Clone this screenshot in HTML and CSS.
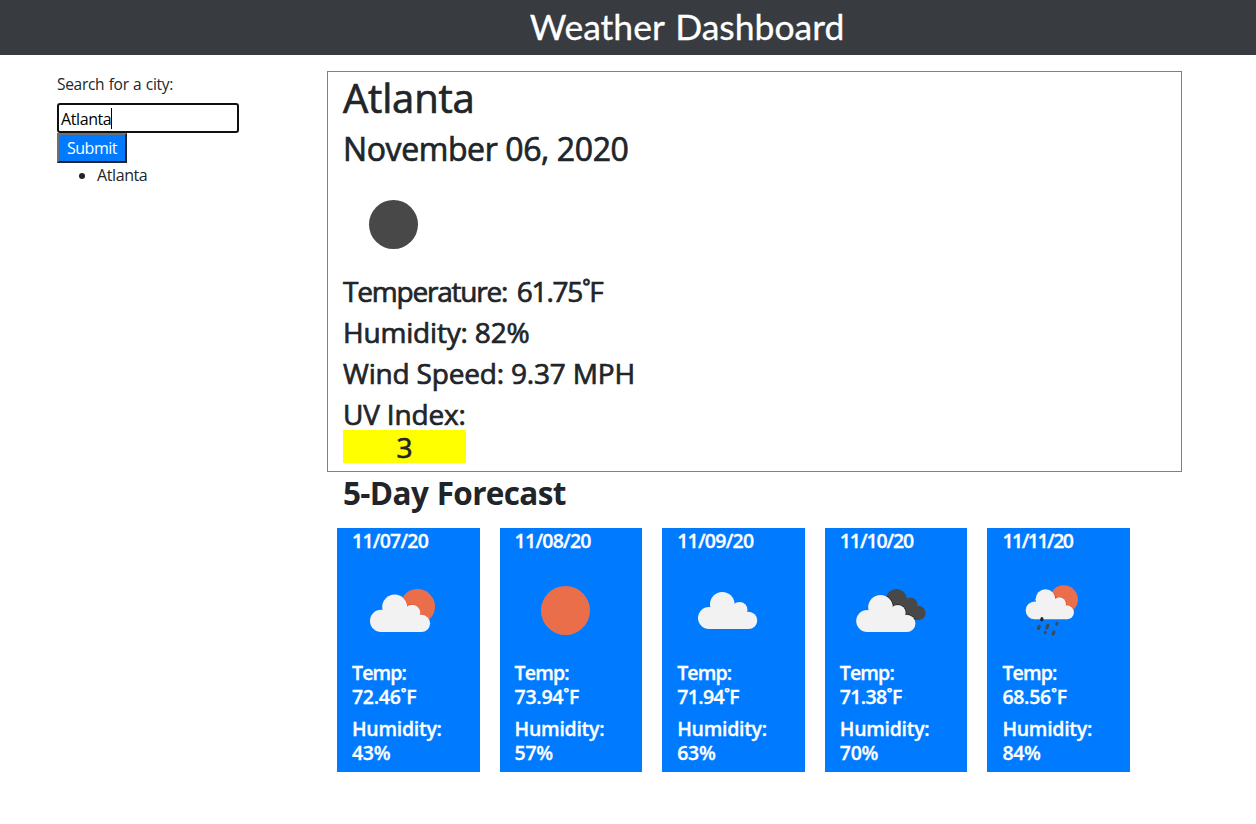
FILE: index.html
```
<!DOCTYPE html>
<html lang="en">
<head>
<meta charset="utf-8">
<title>Weather Dashboard</title>
<link rel="stylesheet" href="styles.css">
</head>
<body>
<svg class="defs" aria-hidden="true">
  <defs>
    <g id="cloud">
      <circle cx="24.300" cy="12.300" r="12.300"/><circle cx="11" cy="26" r="11"/><circle cx="41.500" cy="18" r="8"/><circle cx="50.600" cy="28.400" r="8.600"/>
      <path d="M11 37H50.600V24L41.500 15L24 12L11 18Z"/>
    </g>
    <clipPath id="clip-sun"><circle cx="65.500" cy="46.500" r="17.500"/></clipPath>
    <clipPath id="clip-sun-small"><circle cx="61.700" cy="39.500" r="14.200"/></clipPath>
    <clipPath id="clip-dark"><circle cx="56.400" cy="39.500" r="10.500"/><circle cx="70.700" cy="44.200" r="6.700"/><circle cx="78.400" cy="53" r="7.200"/><path d="M56 39L71 41L78 60H60Z"/></clipPath>
  </defs>
</svg>
<header class="topbar"><h1 class="brand">Weather Dashboard</h1></header>
<main class="layout">
  <aside class="search">
    <label class="label" for="city">Search for a city:</label>
    <div class="field" id="city" role="textbox" tabindex="0"><span class="typed">Atlanta</span><span class="caret"></span></div>
    <button class="submit">Submit</button>
    <ul class="history"><li>Atlanta</li></ul>
  </aside>
  <section class="content">
    <div class="today">
      <h1 class="city">Atlanta</h1>
      <h2 class="date">November 06, 2020</h2>
      <svg class="icon" viewBox="0 0 100 100"><circle class="dark" cx="50.500" cy="50.500" r="24.500"/></svg>
      <h3 class="stat temp">Temperature: 61.75˚F</h3>
      <h3 class="stat">Humidity: 82%</h3>
      <h3 class="stat">Wind Speed: 9.37 MPH</h3>
      <h3 class="stat uv">UV Index: <span class="uv-value">3</span></h3>
    </div>
    <h2 class="forecast-title">5-Day Forecast</h2>
    <div class="forecast">
      <article class="card">
        <h5 class="day">11/07/20</h5>
        <svg class="icon" viewBox="0 0 100 100"><circle class="sun" cx="65.500" cy="46.500" r="17.500"/><g clip-path="url(#clip-sun)"><use class="glow-sun" href="#cloud" transform="translate(18 34.700)"/></g><use class="cloud" href="#cloud" transform="translate(18 34.500) scale(1.015)"/></svg>
        <h5><span class="name">Temp:</span><br>72.46˚F</h5>
        <h5>Humidity:<br>43%</h5>
      </article>
      <article class="card">
        <h5 class="day">11/08/20</h5>
        <svg class="icon" viewBox="0 0 100 100"><circle class="sun" cx="50.500" cy="50.500" r="24.500"/></svg>
        <h5><span class="name">Temp:</span><br>73.94˚F</h5>
        <h5>Humidity:<br>57%</h5>
      </article>
      <article class="card">
        <h5 class="day">11/09/20</h5>
        <svg class="icon" viewBox="0 0 100 100"><use class="cloud" href="#cloud" transform="translate(21 32)"/></svg>
        <h5><span class="name">Temp:</span><br><span class="tight">71.94˚F</span></h5>
        <h5>Humidity:<br>63%</h5>
      </article>
      <article class="card">
        <h5 class="day ones-3">11/10/20</h5>
        <svg class="icon" viewBox="0 0 100 100"><rect class="dark" x="40" y="20" width="50" height="50" clip-path="url(#clip-dark)"/><g clip-path="url(#clip-dark)"><use class="glow-dark" href="#cloud" transform="translate(16.200 35)"/></g><use class="cloud" href="#cloud" transform="translate(16.200 35)"/></svg>
        <h5><span class="name">Temp:</span><br><span class="tight">71.38˚F</span></h5>
        <h5>Humidity:<br>70%</h5>
      </article>
      <article class="card">
        <h5 class="day ones-4">11/11/20</h5>
        <svg class="icon" viewBox="0 0 100 100"><circle class="sun" cx="61.700" cy="39.500" r="14.200"/><g clip-path="url(#clip-sun-small)"><use class="glow-sun" href="#cloud" transform="translate(23.700 29.200) scale(.815)"/></g><use class="cloud" href="#cloud" transform="translate(23.700 29.200) scale(.815)"/><path class="drops" d="M37.300 66.400L36.400 68.600M46 65.200L44.800 68M55 63.400L54.600 64.200M43.300 72.300L43.100 72.700M52 71.800L51 74.200"/><path class="drops drop-top" d="M40 58.600L39.700 59.800"/></svg>
        <h5><span class="name">Temp:</span><br>68.56˚F</h5>
        <h5>Humidity:<br>84%</h5>
      </article>
    </div>
  </section>
</main>
</body>
</html>
```
FILE: styles.css
```
* { box-sizing: border-box; }
body { margin: 0; background: #fff; color: #212529; font: 400 16px/24px "Open Sans", "Noto Sans", sans-serif; letter-spacing: -.4px; }
h1, h2, h3, h5 { margin: 0 0 7px; padding-top: 1px; font-weight: 400; letter-spacing: -.18px; -webkit-text-stroke: .7px currentColor; }
.defs { display: block; width: 0; height: 0; }
.topbar { height: 55px; background: #383b40; padding-left: 118px; text-align: center; }
.brand { margin: 0; padding: 0; color: #fff; font: 400 35.500px/53px Lato, "Open Sans", sans-serif; letter-spacing: 0; word-spacing: 2px; white-space: nowrap; -webkit-text-stroke: .3px currentColor; }
.layout { display: flex; padding: 16px 74px 0 57px; }
.search { width: 270px; flex: none; }
.label { display: block; padding-top: 1px; margin-bottom: 7px; font-size: 15.500px; letter-spacing: -.3px; word-spacing: .7px; }
.field { display: flex; align-items: center; width: 182px; height: 30px; padding: 1px 0 0 2px; border: 2px solid #101010; border-radius: 3px; color: #000; }
.caret { width: 1px; height: 21px; margin-top: -1px; background: #000; }
.submit { display: block; width: 70px; height: 30px; padding: 0; border: 2px solid; border-color: #6c6f73 #212529 #212529 #6c6f73; background: #007bff; color: #fff; font: inherit; line-height: 26px; letter-spacing: -.45px; }
.history { margin: 0; padding-left: 40px; }
.content { flex: 1; }
.today { height: 401px; padding-left: 15px; border: 1px solid #808080; }
.city { padding-top: 2px; margin-bottom: 6px; font-size: 40px; line-height: 48px; }
.date { padding-top: 2px; margin-bottom: 6px; font-size: 32px; line-height: 38px; letter-spacing: -.4px; }
.icon { display: block; width: 100px; height: 100px; }
.stat { font-size: 28px; line-height: 33px; }
.temp { letter-spacing: -1.200px; word-spacing: 3.500px; }
.uv { width: 123px; white-space: nowrap; }
.uv-value { display: block; height: 33px; margin-top: -1px; line-height: 34px; background: #ff0; text-align: center; }
.forecast-title { margin: 0; padding: 2px 0 0 16px; height: 56px; font-weight: 700; font-size: 31.500px; line-height: 38px; letter-spacing: -.65px; word-spacing: 1px; -webkit-text-stroke: 0; }
.forecast { display: flex; gap: 20px; padding: 0 52px 0 10px; }
.card { flex: 1; height: 244px; padding-left: 15px; background: #007bff; color: #fff; }
.card h5 { font-size: 19.500px; line-height: 24px; font-weight: 600; letter-spacing: -.28px; -webkit-text-stroke: .3px currentColor; }
.card .day { letter-spacing: -.75px; }
.card .ones-3 { letter-spacing: -1.100px; }
.card .ones-4 { letter-spacing: -1.500px; }
.name { letter-spacing: -.850px; }
.tight { letter-spacing: -.650px; }
.dark { fill: #484849; }
.sun { fill: #eb6e4b; }
.cloud { fill: #f2f2f2; }
.glow-sun { fill: #e0492b; stroke: #e0492b; stroke-width: 1.500px; }
.glow-dark { fill: #222; stroke: #222; stroke-width: 1.500px; }
.drops { fill: none; stroke: #484849; stroke-width: 3px; stroke-linecap: round; }
.drop-top { stroke: #222; }
```
